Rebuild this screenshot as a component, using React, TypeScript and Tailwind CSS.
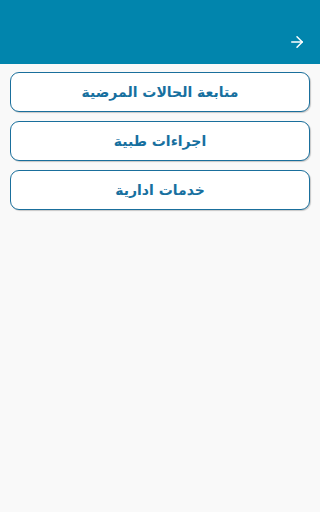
import { ArrowRight } from 'lucide-react';

const ITEMS = ['متابعة الحالات المرضية', 'اجراءات طبية', 'خدمات ادارية'];

export default function App() {
	return (
		<div className="min-h-[512px] w-full bg-[#f9f9f9]" style={{ fontFamily: "'DejaVu Sans', 'Noto Sans', sans-serif" }}>
			<header className="flex h-16 items-end justify-end bg-[#0185ad] px-[14px] pb-[13px]">
				<ArrowRight className="h-[18px] w-[18px] text-white" strokeWidth={2} />
			</header>
			<div className="flex flex-col gap-[9px] px-[10px] pt-[8px]">
				{ITEMS.map((label) => (
					<button
						key={label}
						dir="rtl"
						className="flex h-10 w-full items-center justify-center rounded-[9px] border border-[#1a6f9c] bg-white text-[14px] font-bold text-[#17709f] shadow-[1px_1px_1px_rgba(0,0,0,0.2)]"
					>
						{label}
					</button>
				))}
			</div>
		</div>
	);
}
